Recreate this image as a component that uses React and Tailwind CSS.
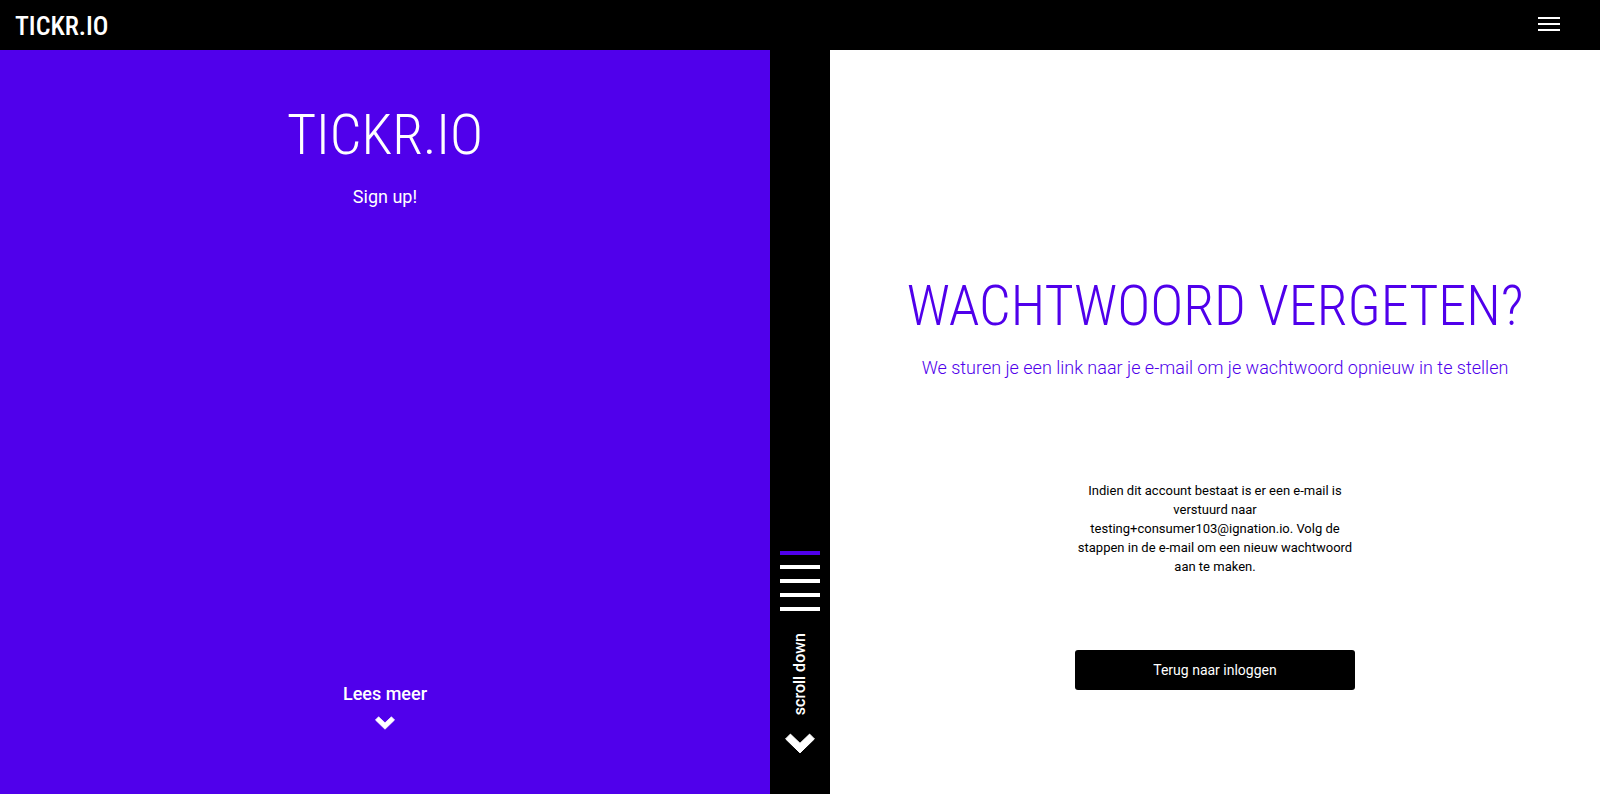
const bars = ['bg-[#5000eb]', 'bg-white', 'bg-white', 'bg-white', 'bg-white'];

function Chevron({ className }) {
  return (
    <svg className={className} viewBox="0 0 30 20" fill="currentColor" stroke="currentColor" strokeWidth="1" strokeLinejoin="round" aria-hidden="true">
      <path d="M5.4.6.6 5.4 15 19.4 29.4 5.4 24.6.6 15 9.8Z" />
    </svg>
  );
}

export default function App() {
  return (
    <div className="flex min-h-screen flex-col bg-white font-['Roboto',sans-serif] text-black">
      <header className="flex h-[50px] items-center justify-between bg-black pr-10 pl-[15px] text-white">
        <a href="#home" className="pt-0.5 font-['Roboto_Condensed','Roboto',sans-serif] text-[26px] leading-8 font-medium">TICKR.IO</a>
        <button type="button" aria-label="Menu" className="flex w-[22px] flex-col gap-1 pb-0.5">
          <span className="h-0.5 bg-white" />
          <span className="h-0.5 bg-white" />
          <span className="h-0.5 bg-white" />
        </button>
      </header>
      <div className="flex grow">
        <section className="flex flex-1 flex-col items-center justify-between bg-[#5000eb] pt-[50px] pb-16 text-white">
          <div className="flex flex-col items-center">
            <h1 className="font-['Roboto_Condensed','Roboto',sans-serif] text-[56px] leading-[71px] font-[350]">TICKR.IO</h1>
            <p className="mt-3 text-lg leading-7">Sign up!</p>
          </div>
          <a href="#more" className="flex flex-col items-center gap-2 text-lg leading-7 font-medium">
            Lees meer
            <Chevron className="h-[14px] w-5" />
          </a>
        </section>
        <aside className="flex w-[60px] flex-col items-center justify-end bg-black pb-10 text-white">
          <div className="flex flex-col gap-2.5">
            {bars.map((color, i) => (
              <span key={i} className={`h-1 w-10 ${color}`} />
            ))}
          </div>
          <a href="#next" className="mt-[22px] flex flex-col items-center gap-[18px]">
            <span className="rotate-180 text-base leading-6 font-medium [writing-mode:vertical-rl]">scroll down</span>
            <Chevron className="h-[21px] w-[30px]" />
          </a>
        </aside>
        <main className="flex flex-1 flex-col items-center pt-[221px] text-center">
          <h2 className="font-['Roboto_Condensed','Roboto',sans-serif] text-[56px] leading-[71px] font-[350] whitespace-nowrap text-[#5000eb]">WACHTWOORD VERGETEN?</h2>
          <p className="mt-3 text-lg leading-7 font-light text-[#5000eb]">We sturen je een link naar je e-mail om je wachtwoord opnieuw in te stellen</p>
          <p className="mt-[99px] w-[280px] text-[13px] leading-[19px]">
            Indien dit account bestaat is er een e-mail is verstuurd naar testing+consumer103@ignation.io. Volg de stappen in de e-mail om een nieuw wachtwoord aan te maken.
          </p>
          <button type="button" className="mt-[74px] h-10 w-[280px] rounded-[3px] bg-black text-sm text-white">Terug naar inloggen</button>
        </main>
      </div>
    </div>
  );
}
